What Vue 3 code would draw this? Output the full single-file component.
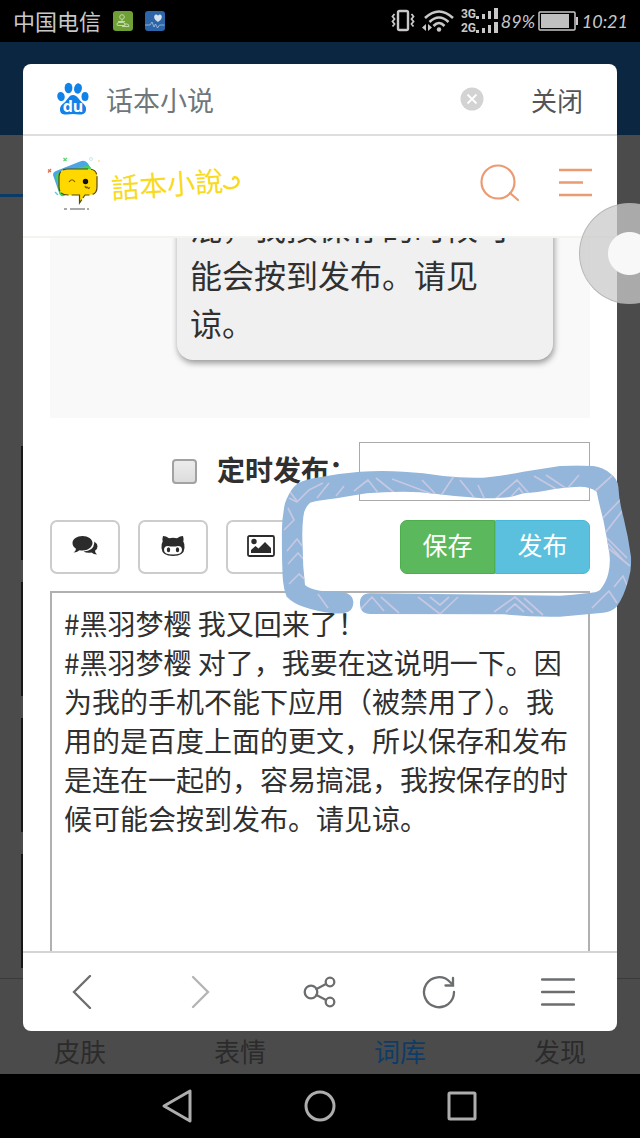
<script setup>
import { ref } from 'vue'

const query = ref('话本小说')
const scheduled = ref(false)
const scheduleTime = ref('')
const preview = '混，我按保存的时候可能会按到发布。请见谅。'
const draft = ref(
  '#黑羽梦樱 我又回来了！\n#黑羽梦樱 对了，我要在这说明一下。因为我的手机不能下应用（被禁用了）。我用的是百度上面的更文，所以保存和发布是连在一起的，容易搞混，我按保存的时候可能会按到发布。请见谅。'
)
const tabs = ['皮肤', '表情', '词库', '发现']
const activeTab = '词库'
</script>

<template>
  <div class="screen">
    <header class="status">
      <span class="carrier">中国电信</span>
      <svg class="badge" width="20" height="20" viewBox="0 0 20 20">
        <rect width="20" height="20" rx="3" fill="#6fa036" />
        <g fill="none" stroke="#c4d9a8" stroke-width="1">
          <circle cx="9" cy="6" r="2.300" />
          <path d="M5 10.500h7M9 8.500v2M4 14q-.5-2.500 2-2.500h4q2 0 2 2v1H6q-2 0-2-.5zM11 13h3q2 0 2 2.500H9" />
        </g>
      </svg>
      <svg class="badge" width="20" height="20" viewBox="0 0 20 20">
        <rect width="20" height="20" rx="3" fill="#2c66a8" />
        <path d="M13 11C8 8 8.500 4 11 3.500q1.500 0 2 1.300 .7-1.300 2-1.300C17.500 4 18 8 13 11z" fill="#d8e2ee" />
        <path d="M0 14h5l2-3 2 5 1.500-3 2 4 2-3h5" fill="none" stroke="#a9c2de" stroke-width=".8" />
      </svg>
      <span class="spacer"></span>
      <svg width="24" height="24" viewBox="0 0 24 24" fill="none" stroke="#c8c8c8">
        <rect x="7" y="2" width="10" height="19" rx="1.500" stroke-width="2.400" />
        <path d="M3.500 5l-2 2.500 2 2.500-2 2.500 2 2.500-2 2.500M20.500 5l2 2.500-2 2.500 2 2.500-2 2.500 2 2.500" stroke-width="1.800" />
      </svg>
      <svg class="wifi" width="34" height="24" viewBox="0 0 34 24">
        <g fill="none" stroke="#c8c8c8" stroke-width="2.600">
          <path d="M4 9Q18-4 32 9M8.500 13Q18 4 27.500 13M12.500 17Q18 11 23.500 17" />
        </g>
        <circle cx="18" cy="20.500" r="2.200" fill="#c8c8c8" />
        <path d="M5 15v7l-4-3.500zM7 15v7l4-3.500z" fill="#c8c8c8" />
      </svg>
      <span class="signals">
        <span v-for="g in ['3G', '2G']" :key="g" class="signal">
          {{ g }}
          <svg width="22" height="12" viewBox="0 0 22 12" fill="#c8c8c8">
            <rect y="8" width="3" height="3" /><rect x="6" y="6" width="3" height="5" />
            <rect x="12" y="3" width="3" height="8" /><rect x="18" width="4" height="11" />
          </svg>
        </span>
      </span>
      <span class="figure percent">89%</span>
      <svg width="40" height="20" viewBox="0 0 40 20">
        <rect x="1" y="1" width="36" height="18" rx="1" fill="none" stroke="#c8c8c8" stroke-width="1.500" />
        <rect x="3" y="3" width="28" height="14" fill="#c0c0c0" />
        <rect x="38" y="6" width="2" height="8" fill="#c8c8c8" />
      </svg>
      <span class="figure clock">10:21</span>
    </header>

    <main class="stage">
      <div class="backdrop">
        <div class="back-head"></div>
        <div class="back-tabs"></div>
        <div class="back-list"><i v-for="n in 4" :key="n" class="thumb"></i></div>
        <nav class="back-nav">
          <a v-for="t in tabs" :key="t" href="#" :class="{ active: t === activeTab }">{{ t }}</a>
        </nav>
      </div>

      <section class="dialog">
        <div class="address">
          <svg width="32" height="34" viewBox="0 0 32 34">
            <g fill="#1183e8">
              <ellipse cx="4" cy="14.500" rx="3.700" ry="4.600" transform="rotate(-12 4 14.500)" />
              <ellipse cx="11.500" cy="6" rx="3.900" ry="5.200" />
              <ellipse cx="21" cy="6.500" rx="3.900" ry="5.200" transform="rotate(12 21 6.500)" />
              <ellipse cx="28" cy="14.500" rx="3.500" ry="4.500" />
              <path d="M16 13c4 0 5.500 4 8.500 7 3 2.500 5 4.500 4.500 8-.5 4-4 5-7 4.500-4-.7-8-.7-12 0-3.500.5-7-.5-7-5 0-4 3-5.500 5.500-8 2.500-3 4-6.500 7.500-6.500z" />
            </g>
            <text x="16" y="29.500" text-anchor="middle" class="du">du</text>
          </svg>
          <input v-model="query" class="query" type="text" aria-label="网址" />
          <button class="clear" aria-label="清除">
            <svg width="24" height="24" viewBox="0 0 24 24">
              <circle cx="12" cy="12" r="11.500" fill="#d3d3d3" />
              <path d="M7.500 7.500l9 9M16.500 7.500l-9 9" stroke="#fff" stroke-width="1.800" />
            </svg>
          </button>
          <button class="close">关闭</button>
        </div>

        <div class="site">
          <a class="brand" href="#">
            <svg width="56" height="56" viewBox="0 0 56 56">
              <path d="M7 20q0-3 3-4L34 6.500q5-2 8 2l4 7-28 25q-4 1-5-3z" fill="#4aa6e4" />
              <path d="M10 22q0-4 4-5l26-6q5-1 6 5l-28 25q-4 1-5-4z" fill="#48d25c" />
              <path d="M22 14h20q9 0 9 8v10q0 8-8 8h-4l-5.500 8V40H22q-9 0-9-8V22q0-8 9-8z" fill="#ffd800" stroke="#51461a" stroke-width="1.200" stroke-dasharray="20 3 8 2" />
              <path d="M23 27q3-4.500 6 0M39 31q1 3 2 1l1.500 1.500 1.500-1" fill="none" stroke="#7b5a00" stroke-width="1.200" />
              <circle cx="39.500" cy="26.500" r="2.700" fill="#111" />
              <path d="M18 54h3M24 54h15M41 54h2" stroke="#555" stroke-width="1" />
              <path d="M2 14.500l3 2.500M5 14l-3 3.500" stroke="#e5694a" stroke-width="1.200" />
              <path d="M17.500 3l3 3M21 3l-3.500 3" stroke="#62cf76" stroke-width="1.200" />
              <path d="M9 37l3 3" stroke="#5ac6df" stroke-width="1.200" />
              <circle cx="45" cy="4" r="1.500" fill="none" stroke="#c9e9ef" />
              <circle cx="53" cy="6" r="1" fill="#f9df9a" />
            </svg>
            <span class="wordmark">話本小說</span>
            <svg class="swash" width="18" height="16" viewBox="0 0 18 16">
              <path d="M1 11q5 4 11 1 6-4 2-9-3-2-4 1" fill="none" stroke="#f8da20" stroke-width="2.500" stroke-linecap="round" />
            </svg>
          </a>
          <button aria-label="搜索">
            <svg width="42" height="38" viewBox="0 0 42 38" fill="none" stroke="#eb9a72" stroke-width="2.200">
              <circle cx="18" cy="18" r="16.500" /><path d="M30 29l8 7" stroke-linecap="round" />
            </svg>
          </button>
          <button class="site-menu" aria-label="菜单">
            <svg width="34" height="30" viewBox="0 0 34 30" stroke="#eb9a72" stroke-width="2.400">
              <path d="M0 2h33M0 14.500h24M0 27h33" />
            </svg>
          </button>
        </div>

        <div class="content">
          <div class="preview"><p class="bubble">{{ preview }}</p></div>

          <div class="schedule">
            <input id="timed" v-model="scheduled" type="checkbox" />
            <label for="timed">定时发布：</label>
            <input v-model="scheduleTime" class="time" type="text" aria-label="发布时间" />
          </div>

          <div class="actions">
            <button class="tool" aria-label="对话">
              <svg width="26" height="22" viewBox="0 0 26 22" fill="#2b2b2b">
                <path d="M10.500 1C16 1 20.500 4 20.500 8s-4.500 7.500-10 7.500q-1.500 0-3-.3Q5 17.500 1.500 17.500 4 16 4 13.800.5 11.500.5 8c0-4 4.500-7 10-7z" />
                <path d="M22.300 6.500q3.200 2 3.200 5 0 2.500-2.500 4.300 0 2 2 3.700-3.500 0-5.500-2-5 .7-8-1 10-.5 10.800-8.500z" />
              </svg>
            </button>
            <button class="tool" aria-label="表情">
              <svg width="26" height="22" viewBox="0 0 26 22">
                <path d="M3 1q3 0 6 2.300 4-1 8 0Q20 1 23 1q1 3 .3 5.500Q25 9 24.500 13 24 21 13 21T1.500 13Q1 9 2.700 6.500 2 4 3 1z" fill="#2b2b2b" />
                <path d="M8 11q5 1 10 0 4 0 4 4 0 4.500-9 4.500T4 15q0-4 4-4z" fill="#fff" />
                <ellipse cx="8.500" cy="14.800" rx="1.700" ry="2.500" fill="#2b2b2b" />
                <ellipse cx="17.500" cy="14.800" rx="1.700" ry="2.500" fill="#2b2b2b" />
              </svg>
            </button>
            <button class="tool" aria-label="图片">
              <svg width="28" height="22" viewBox="0 0 28 22">
                <rect x="1" y="1" width="26" height="20" rx="1.500" fill="none" stroke="#2b2b2b" stroke-width="1.800" />
                <circle cx="7" cy="6.500" r="2.700" fill="#2b2b2b" />
                <path d="M4 18v-3l4.500-4 3 2.500L18 7l6 6v5z" fill="#2b2b2b" />
              </svg>
            </button>
            <span class="spacer"></span>
            <div class="group">
              <button class="save">保存</button>
              <button class="publish">发布</button>
            </div>
          </div>

          <textarea v-model="draft" aria-label="正文" spellcheck="false"></textarea>
        </div>

        <nav class="toolbar">
          <button aria-label="后退">
            <svg width="34" height="34" viewBox="0 0 34 34"><path d="M25 1L9 17l16 16" /></svg>
          </button>
          <button class="off" aria-label="前进">
            <svg width="34" height="34" viewBox="0 0 34 34"><path d="M9 2l15 15L9 32" /></svg>
          </button>
          <button aria-label="分享">
            <svg width="34" height="34" viewBox="0 0 34 34">
              <circle cx="8" cy="17" r="6.300" /><circle cx="27" cy="7" r="4.300" /><circle cx="27" cy="27" r="4.300" />
              <path d="M13.500 14l9.500-5M13.500 20l9.500 5" />
            </svg>
          </button>
          <button aria-label="刷新">
            <svg width="34" height="34" viewBox="0 0 34 34">
              <path d="M32 17A15 15 0 1 1 28 7L31 10" /><path d="M31 3v7.500h-7.500" />
            </svg>
          </button>
          <button aria-label="更多">
            <svg width="34" height="34" viewBox="0 0 34 34"><path d="M1 4.500h32M1 17h32M1 29.500h32" /></svg>
          </button>
        </nav>
      </section>

      <svg class="marker" width="370" height="200" viewBox="0 0 1110 600">
        <defs>
          <clipPath id="brush">
            <path d="M72 170Q90 152 130 145Q200 130 270 125Q340 121 400 125Q460 128 520 138Q580 145 640 143Q700 138 760 125L870 108Q920 105 970 108Q1000 112 1020 130Q1042 145 1045 170Q1047 215 1060 260Q1075 320 1083 380Q1086 415 1075 450Q1062 500 1040 530Q1025 545 1000 548L870 560Q790 562 700 553L300 552Q278 552 272 535Q266 510 275 500Q285 490 300 490L560 493L870 497Q910 496 950 490Q980 488 990 480Q1010 455 1015 430Q1022 400 1018 370Q1010 320 1000 270Q988 225 980 185Q960 170 930 170Q890 170 850 178Q800 188 760 190Q720 204 690 203Q650 207 620 203Q560 200 500 192Q450 185 400 185Q340 185 290 190Q240 198 200 205Q150 210 120 218Q102 235 100 260Q95 300 98 350Q98 410 105 465Q120 478 150 482Q190 487 220 487Q248 492 250 515Q250 538 235 545Q215 553 190 550Q140 544 100 530Q70 520 50 500Q40 475 38 440Q35 370 35 310Q36 260 45 220Q55 190 72 170z" />
          </clipPath>
        </defs>
        <g clip-path="url(#brush)">
          <rect width="1110" height="600" fill="#93b6da" />
          <g transform="translate(18 90) scale(3)" fill="none" stroke="#c6c8e2" stroke-width="1.700" stroke-linejoin="round">
            <path d="M13 38l8 4 12-12 14-7M14 32l7 9M41 38l12-15M12 48l6 12-10 10M11 91l10-12 9 12M12 104l10-11 8 9M13 124l10-10 9 8" />
            <path d="M60 36l8-10M78 31l14-11 11 14M100 18l26 21M116 19l48 18 14-21M146 20l22 23M184 20l17 21M202 25l8 17M216 42l25-22 17 19M233 39l10-11 8 11M258 16l24 14M270 15l21 14 12-14M318 32l20-18" />
            <path d="M346 38l-23 24M347 50l-21 27 22 24M331 78l20 20M354 106l-22-18M338 127l9-11 4 9M316 148l17-17 8 12" />
            <path d="M52 148l-10-14M84 150l12-13 12 14M105 137l18 16M142 137l22 17 18-17M154 137l10 8 9-8M218 152l21-15 18 16M230 152l9-8 9 8M248 138l19 17" />
          </g>
        </g>
      </svg>
    </main>

    <nav class="system">
      <button aria-label="返回">
        <svg width="34" height="36" viewBox="0 0 34 36"><path d="M3 18L29 3v30z" /></svg>
      </button>
      <button aria-label="主页">
        <svg width="34" height="36" viewBox="0 0 34 36"><circle cx="17" cy="18" r="14" /></svg>
      </button>
      <button aria-label="最近任务">
        <svg width="34" height="36" viewBox="0 0 34 36"><rect x="4" y="5" width="26" height="26" rx="1" /></svg>
      </button>
    </nav>
    <div class="assist"></div>
  </div>
</template>

<style>
body {
  background: #000;
}
</style>

<style scoped>
.screen,
.screen * {
  box-sizing: border-box;
}
.screen {
  position: relative;
  display: flex;
  flex-direction: column;
  height: 100vh;
  overflow: hidden;
  font-family: "Noto Sans CJK SC", sans-serif;
  color: #303030;
}
button,
input,
textarea {
  font-family: inherit;
  color: inherit;
  margin: 0;
}
button {
  display: flex;
  align-items: center;
  justify-content: center;
  padding: 0;
  border: 0;
  background: none;
}
a {
  color: inherit;
  text-decoration: none;
}
svg {
  flex: none;
}
.spacer {
  flex: 1;
}
.status {
  display: flex;
  align-items: center;
  height: 42px;
  padding: 0 12px 0 13px;
  background: #000;
  color: #c8c8c8;
}
.carrier {
  font-size: 22px;
  line-height: 30px;
  padding-bottom: 2px;
}
.badge {
  margin-left: 12px;
}
.wifi {
  margin-left: 6px;
}
.signals {
  display: grid;
  margin-left: 6px;
  font: bold 12px/14px Roboto, sans-serif;
}
.signal {
  display: flex;
  align-items: center;
}
.figure {
  font: italic 18px/24px Lato, sans-serif;
}
.percent {
  width: 40px;
  text-align: center;
}
.clock {
  width: 50px;
  text-align: right;
}
.stage {
  position: relative;
  flex: 1;
  display: grid;
  min-height: 0;
}
.backdrop,
.dialog {
  grid-area: 1 / 1;
  min-height: 0;
  display: flex;
  flex-direction: column;
}
.backdrop {
  background: #4b4b4b;
}
.back-head {
  height: 93px;
  background: #0a2641;
}
.back-tabs {
  width: 25%;
  height: 62px;
  border-bottom: 3px solid #0b3a66;
}
.back-list {
  flex: 1;
  display: flex;
  flex-direction: column;
  justify-content: flex-end;
  gap: 22px;
  padding: 0 0 10px 21px;
}
.thumb {
  width: 120px;
  height: 114px;
  background: #171717;
}
.back-nav {
  display: flex;
  align-items: flex-end;
  height: 96px;
  padding-bottom: 4px;
  border-top: 1px solid #3a3a3a;
  color: #2b2b2b;
  font-size: 26px;
  line-height: 38px;
}
.back-nav a {
  flex: 1;
  text-align: center;
}
.back-nav .active {
  color: #0e3c68;
}
.dialog {
  margin: 22px 23px 43px;
  border-radius: 8px;
  background: #fff;
  overflow: hidden;
}
.address {
  display: flex;
  align-items: center;
  height: 72px;
  padding: 0 34px;
  border-bottom: 2px solid #dedede;
}
.query {
  flex: 1;
  min-width: 0;
  margin-left: 17px;
  padding: 0;
  border: 0;
  outline: 0;
  background: none;
  color: #6f777c;
  font-size: 27px;
}
.close {
  margin-left: 47px;
  color: #555;
  font-size: 26px;
}
.site {
  display: flex;
  align-items: center;
  height: 102px;
  padding: 0 24px 6px 23px;
  border-bottom: 2px solid #f4f4ee;
}
.brand {
  flex: 1;
  display: flex;
  align-items: center;
}
.wordmark {
  margin-left: 9px;
  font: 28px/40px "Noto Sans CJK TC", sans-serif;
  color: #f8da20;
  transform: rotate(-4deg);
}
.site-menu {
  margin-left: 37px;
}
.content {
  flex: 1;
  min-height: 0;
  display: flex;
  flex-direction: column;
  padding: 0 27px;
}
.preview {
  flex: none;
  display: flex;
  align-items: flex-end;
  justify-content: flex-end;
  height: 180px;
  padding: 0 37px 58px 0;
  background: #f9f9f9;
  overflow: hidden;
}
.bubble {
  width: 376px;
  margin: 0;
  padding: 13px 13px 14px;
  border-radius: 16px;
  background: #f0f0f0;
  box-shadow: 1px 3px 6px rgba(0, 0, 0, 0.4);
  font-size: 32px;
  line-height: 48px;
}
.schedule {
  display: flex;
  align-items: center;
  justify-content: flex-end;
  margin-top: 24px;
}
.schedule input[type="checkbox"] {
  appearance: none;
  width: 25px;
  height: 25px;
  border: 2px solid #a2a2a2;
  border-radius: 4px;
  background: linear-gradient(#ececec, #dcdcdc);
}
.schedule label {
  width: 142px;
  margin-left: 20px;
  padding-bottom: 6px;
  font-size: 28px;
  font-weight: bold;
  line-height: 40px;
  white-space: nowrap;
}
.time {
  width: 231px;
  height: 59px;
  border: 1px solid #aaa;
  background: #fff;
  font-size: 28px;
}
.actions {
  display: flex;
  gap: 18px;
  margin-top: 19px;
}
.tool {
  width: 70px;
  height: 54px;
  padding-bottom: 2px;
  border: 2px solid #ccc;
  border-radius: 7px;
}
.group {
  display: flex;
}
.group button {
  width: 95px;
  height: 54px;
  padding-bottom: 6px;
  border: 1px solid #4cae4c;
  background: #5cb85c;
  color: #fff;
  font-size: 25px;
}
.group .save {
  border-radius: 7px 0 0 7px;
}
.group .publish {
  border-color: #46b8da;
  border-radius: 0 7px 7px 0;
  background: #5bc0de;
}
textarea {
  flex: 1;
  min-height: 0;
  margin-top: 17px;
  padding: 11px 12px 0;
  border: 2px solid #b0b0b0;
  border-bottom: 0;
  outline: 0;
  resize: none;
  overflow: hidden;
  background: #fff;
  font-size: 28px;
  line-height: 39px;
}
.toolbar {
  display: flex;
  height: 80px;
  border-top: 2px solid #d4d4d4;
}
.toolbar button {
  flex: 1;
}
.toolbar svg {
  fill: none;
  stroke: #6b6d6f;
  stroke-width: 2.3;
  stroke-linecap: round;
}
.toolbar .off svg {
  stroke: #b4b4b4;
}
.du {
  fill: #fff;
  font: bold 16px "Open Sans", sans-serif;
}
.marker {
  position: absolute;
  top: 388px;
  left: calc(50% - 50px);
}
.system {
  display: flex;
  justify-content: center;
  height: 64px;
  background: #000;
}
.system button {
  width: 142px;
}
.system svg {
  fill: none;
  stroke: #adadad;
  stroke-width: 3;
  stroke-linejoin: round;
}
.assist {
  position: absolute;
  top: 203px;
  right: -40px;
  width: 101px;
  height: 101px;
  border: 1px solid rgba(170, 170, 170, 0.7);
  border-radius: 50%;
  background: radial-gradient(circle, #f8f8f8 21px, rgba(202, 202, 202, 0.75) 22px);
}
</style>
